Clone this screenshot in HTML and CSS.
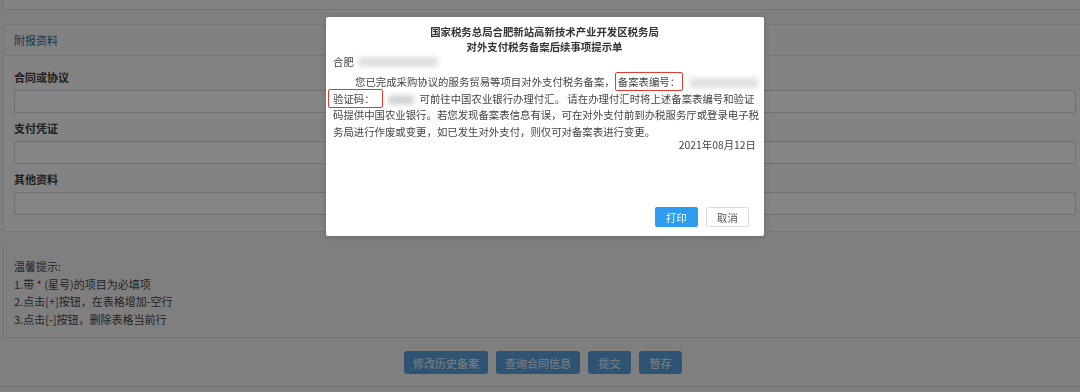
FILE: index.html
```html
<!DOCTYPE html>
<html>
<head>
  <meta charset="utf-8" />
  <title>对外支付税务备案</title>
  <link rel="stylesheet" href="styles.css">
</head>
<body>
<div class="page">
  <div class="top-strip"></div>

  <div class="panel">
    <div class="panel-head">附报资料</div>
    <div class="panel-body">
      <div class="field">
        <label class="field-label">合同或协议</label>
        <div class="field-input"></div>
      </div>
      <div class="field">
        <label class="field-label">支付凭证</label>
        <div class="field-input"></div>
      </div>
      <div class="field">
        <label class="field-label">其他资料</label>
        <div class="field-input"></div>
      </div>
    </div>
  </div>

  <div class="tips">
    <div>温馨提示:</div>
    <div>1.带 <span class="star">*</span> (星号)的项目为必填项</div>
    <div>2.点击[+]按钮，在表格增加-空行</div>
    <div>3.点击[-]按钮，删除表格当前行</div>
  </div>

  <div class="action-bar">
    <button class="btn-primary">修改历史备案</button>
    <button class="btn-primary">查询合同信息</button>
    <button class="btn-primary btn-small">提交</button>
    <button class="btn-primary btn-small">暂存</button>
  </div>
</div>

<div class="mask">
  <div class="dialog">
    <div class="dialog-title">
      <div>国家税务总局合肥新站高新技术产业开发区税务局</div>
      <div>对外支付税务备案后续事项提示单</div>
    </div>
    <div class="dialog-to">合肥<span class="redact redact-name"></span></div>
    <p class="dialog-text">
      您已完成采购协议的服务贸易等项目对外支付税务备案，<span class="mark">备案表编号：</span><span class="redact redact-no"></span><br>
      <span class="mark mark-code">验证码：</span><span class="redact redact-code"></span>可前往中国农业银行办理付汇。 请在办理付汇时将上述备案表编号和验证<br>
      码提供中国农业银行。若您发现备案表信息有误，可在对外支付前到办税服务厅或登录电子税<br>
      务局进行作废或变更，如已发生对外支付，则仅可对备案表进行变更。
    </p>
    <div class="dialog-date">2021年08月12日</div>
    <div class="dialog-foot">
      <button class="btn-print">打印</button>
      <button class="btn-cancel">取消</button>
    </div>
  </div>
</div>
</body>
</html>
```

FILE: styles.css
```css
* {
  box-sizing: border-box;
}
body {
  margin: 0;
  width: 1080px;
  height: 392px;
  overflow: hidden;
  background: #f4f4f4;
  font-family: "Noto Sans CJK SC", "Noto Sans", sans-serif;
  font-size: 11px;
  color: #333;
}
.page {
  display: flex;
  flex-direction: column;
  height: 100%;
  padding-left: 3px;
}
.top-strip {
  height: 10px;
  flex-shrink: 0;
  background: #fcfcfc;
  border-bottom: 1px solid #dcdcdc;
  border-left: 1px solid #e2e2e2;
}
.panel {
  margin-top: 14px;
  border: 1px solid #e2e2e2;
  border-right: none;
  background: #fcfcfc;
}
.panel-head {
  height: 31px;
  padding-left: 10px;
  line-height: 30px;
  color: #2a6a9c;
  background: #f8f8f8;
  border-bottom: 1px solid #e2e2e2;
}
.panel-body {
  padding: 12px 4px 16px 10px;
  display: flex;
  flex-direction: column;
  gap: 6px;
}
.field {
  display: flex;
  flex-direction: column;
  gap: 4px;
}
.field-label {
  font-weight: bold;
  line-height: 18px;
  color: #3a3a3a;
}
.field-input {
  height: 23px;
  background: #fff;
  border: 1px solid #d6d6d6;
  border-radius: 2px;
}
.tips {
  margin-top: 12px;
  height: 94px;
  padding: 14px 10px;
  line-height: 17.7px;
  color: #444;
  border-left: 1px solid #e2e2e2;
  border-bottom: 1px solid #d8d8d8;
}
.star {
  color: #c00;
}
.action-bar {
  display: flex;
  justify-content: center;
  gap: 8px;
  padding: 13px 0 12px 6px;
  margin-left: -3px;
  border-bottom: 1px solid #d8d8d8;
}
.btn-primary {
  width: 84px;
  height: 23px;
  border: none;
  border-radius: 3px;
  background: #5aa2dc;
  color: #eef4fa;
  font-family: inherit;
  font-size: 11px;
  padding: 0;
}
.btn-small {
  width: 43px;
}
.mask {
  position: fixed;
  inset: 0;
  background: rgba(0, 0, 0, 0.48);
  display: flex;
  justify-content: center;
  align-items: flex-start;
  padding-top: 17px;
}
.dialog {
  width: 438px;
  height: 219px;
  margin-left: 10px;
  background: #fff;
  border-radius: 2px;
  box-shadow: 0 1px 6px rgba(0, 0, 0, 0.2);
  padding: 7px 8px 9px 7px;
  display: flex;
  flex-direction: column;
  font-size: 10.4px;
  color: #444;
}
.dialog-title {
  text-align: center;
  font-weight: bold;
  line-height: 15px;
  font-size: 10.4px;
  color: #333;
}
.dialog-to {
  line-height: 15px;
  display: flex;
  align-items: center;
}
.dialog-text {
  margin: 5px 0 0;
  line-height: 16.7px;
  text-indent: 22px;
  white-space: nowrap;
}
.mark {
  border: 1.5px solid #e53a2e;
  border-radius: 2px;
  padding: 1px 2px;
}
.mark-code {
  margin-left: -5px;
  padding: 1px 7px 1px 4px;
}
.redact {
  display: inline-block;
  height: 10px;
  background: #d4d4d4;
  border-radius: 4px;
  filter: blur(2.5px);
  vertical-align: middle;
}
.redact-name {
  width: 80px;
  margin-left: 4px;
  background: #e0e0e0;
}
.redact-no {
  width: 70px;
  margin-left: 6px;
  background: #e0e0e0;
}
.redact-code {
  width: 26px;
  margin: 0 6px 0 5px;
}
.dialog-date {
  text-align: right;
  line-height: 14px;
  margin-top: -3px;
}
.dialog-foot {
  margin-top: auto;
  display: flex;
  justify-content: flex-end;
  gap: 8px;
  padding-right: 7px;
}
.btn-print,
.btn-cancel {
  width: 43px;
  height: 20px;
  border-radius: 2px;
  font-family: inherit;
  font-size: 10.4px;
  padding: 0;
}
.btn-print {
  border: none;
  background: #2d9cf0;
  color: #fff;
}
.btn-cancel {
  border: 1px solid #ddd;
  background: #fff;
  color: #555;
}
```
